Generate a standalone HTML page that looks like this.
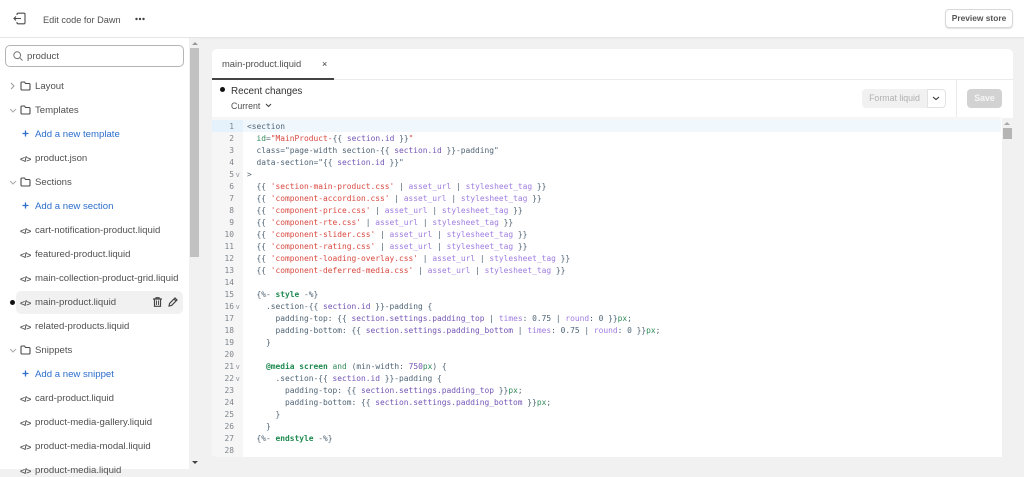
<!DOCTYPE html>
<html><head><meta charset="utf-8"><style>
html,body{margin:0;padding:0}
body{width:1024px;height:469px;overflow:hidden;background:#f1f1f1;position:relative;font-family:"Liberation Sans",sans-serif;color:#4a4a4a}
.a{position:absolute}
.t{position:absolute;font-size:9.6px;line-height:12px;white-space:nowrap;color:#505050;left:35px;margin-top:1px}
.b{color:#2c6ecb}
.i{left:20px;font-size:8.6px;font-weight:bold;letter-spacing:-.6px;color:#555}
svg{position:absolute;overflow:visible}
.c{position:absolute;left:247px;font:7.9px/12px "DejaVu Sans Mono",monospace;white-space:pre;color:#4f6475;height:12px;margin-top:1px}
.n{position:absolute;left:212px;width:22px;text-align:right;font:7.9px/12px "DejaVu Sans Mono",monospace;color:#7f858a;margin-top:1px}
.r{color:#d9483f}.p{color:#9f7ce0}.g{color:#1f8a50;font-weight:bold}.v{color:#7355b5}.e{color:#2f8a58}
.f{position:absolute;left:236px;font:7px/8px "Liberation Sans",sans-serif;color:#8c9196}
</style></head><body>
<div class="a" style="left:0;top:0;width:1024px;height:37px;background:#fff;box-shadow:0 1px 2px rgba(0,0,0,.08)"></div>
<svg style="left:13px;top:12px" width="13" height="13" viewBox="0 0 13 13" fill="none" stroke="#4a4a4a" stroke-width="1.1"><path d="M4 3V2.2a1 1 0 0 1 1-1h6a1 1 0 0 1 1 1v8.6a1 1 0 0 1-1 1H5a1 1 0 0 1-1-1V10M8 6.5H1M3 4.5l-2 2 2 2"/></svg>
<div class="t" style="left:43px;top:13px;font-size:9.2px">Edit code for Dawn</div>
<svg style="left:135px;top:17px" width="10" height="4"><circle cx="1.5" cy="2" r="1.2" fill="#444"/><circle cx="5" cy="2" r="1.2" fill="#444"/><circle cx="8.5" cy="2" r="1.2" fill="#444"/></svg>
<div class="a" style="left:945px;top:9px;width:66px;height:17px;border:1px solid #d8d8d8;border-radius:4px;background:#fff;box-shadow:0 1px 1px rgba(0,0,0,.12);text-align:center;font-size:8.4px;font-weight:bold;line-height:17px;color:#555">Preview store</div>

<div class="a" style="left:0;top:38px;width:189px;height:431px;background:#fff"></div>
<div class="a" style="left:190px;top:38px;width:9px;height:431px;background:#f1f1f1"></div>
<div class="a" style="left:190px;top:48px;width:9px;height:209px;background:#c1c1c1"></div>
<div class="a" style="left:192px;top:42px;border:3px solid transparent;border-bottom:3px solid #999;border-top:0"></div>
<div class="a" style="left:192px;top:461px;border:3px solid transparent;border-top:3px solid #444;border-bottom:0"></div>
<div class="a" style="left:5px;top:45px;width:177px;height:20px;border:1px solid #b5b5b5;border-radius:5px;background:#fff"></div>
<svg style="left:13px;top:51px" width="10" height="10" viewBox="0 0 10 10" fill="none" stroke="#777" stroke-width="1"><circle cx="4.2" cy="4.2" r="3.4"/><path d="M6.8 6.8L9.5 9.5"/></svg>
<div class="t" style="left:27px;top:50px;font-size:9.6px">product</div>

<svg style="left:10px;top:82px" width="6" height="8" fill="none" stroke="#999"><path d="M1 1l3 3-3 3"/></svg>
<svg style="left:9px;top:108px" width="8" height="6" fill="none" stroke="#aaa"><path d="M1 1l3 3 3-3"/></svg>
<svg style="left:9px;top:180px" width="8" height="6" fill="none" stroke="#aaa"><path d="M1 1l3 3 3-3"/></svg>
<svg style="left:9px;top:348px" width="8" height="6" fill="none" stroke="#aaa"><path d="M1 1l3 3 3-3"/></svg>
<svg style="left:20px;top:81px" width="11" height="10" fill="none" stroke="#4a4a4a" stroke-width="1.1"><path d="M1 2a1 1 0 0 1 1-1h2.5l1 1.5H9a1 1 0 0 1 1 1V8a1 1 0 0 1-1 1H2a1 1 0 0 1-1-1z"/></svg>
<svg style="left:20px;top:105px" width="11" height="10" fill="none" stroke="#4a4a4a" stroke-width="1.1"><path d="M1 2a1 1 0 0 1 1-1h2.5l1 1.5H9a1 1 0 0 1 1 1V8a1 1 0 0 1-1 1H2a1 1 0 0 1-1-1z"/></svg>
<svg style="left:20px;top:177px" width="11" height="10" fill="none" stroke="#4a4a4a" stroke-width="1.1"><path d="M1 2a1 1 0 0 1 1-1h2.5l1 1.5H9a1 1 0 0 1 1 1V8a1 1 0 0 1-1 1H2a1 1 0 0 1-1-1z"/></svg>
<svg style="left:20px;top:345px" width="11" height="10" fill="none" stroke="#4a4a4a" stroke-width="1.1"><path d="M1 2a1 1 0 0 1 1-1h2.5l1 1.5H9a1 1 0 0 1 1 1V8a1 1 0 0 1-1 1H2a1 1 0 0 1-1-1z"/></svg>

<div class="t" style="top:80px">Layout</div>
<div class="t" style="top:104px">Templates</div>
<div class="t b" style="top:128px">Add a new template</div>
<div class="t" style="top:152px">product.json</div>
<div class="t" style="top:176px">Sections</div>
<div class="t b" style="top:200px">Add a new section</div>
<div class="t" style="top:224px">cart-notification-product.liquid</div>
<div class="t" style="top:248px">featured-product.liquid</div>
<div class="t" style="top:272px">main-collection-product-grid.liquid</div>
<div class="a" style="left:16px;top:291px;width:167px;height:23px;background:#f1f1f1;border-radius:5px"></div>
<div class="t" style="top:296px">main-product.liquid</div>
<div class="t" style="top:320px">related-products.liquid</div>
<div class="t" style="top:344px">Snippets</div>
<div class="t b" style="top:368px">Add a new snippet</div>
<div class="t" style="top:392px">card-product.liquid</div>
<div class="t" style="top:416px">product-media-gallery.liquid</div>
<div class="t" style="top:440px">product-media-modal.liquid</div>
<div class="t" style="top:464px">product-media.liquid</div>

<div class="t i" style="top:152px">&lt;/&gt;</div>
<div class="t i" style="top:224px">&lt;/&gt;</div>
<div class="t i" style="top:248px">&lt;/&gt;</div>
<div class="t i" style="top:272px">&lt;/&gt;</div>
<div class="t i" style="top:296px">&lt;/&gt;</div>
<div class="t i" style="top:320px">&lt;/&gt;</div>
<div class="t i" style="top:392px">&lt;/&gt;</div>
<div class="t i" style="top:416px">&lt;/&gt;</div>
<div class="t i" style="top:440px">&lt;/&gt;</div>
<div class="t i" style="top:464px">&lt;/&gt;</div>

<svg style="left:22px;top:130px" width="7" height="7" stroke="#2c6ecb" stroke-width="1.3"><path d="M3.5 .5v6M.5 3.5h6"/></svg>
<svg style="left:22px;top:202px" width="7" height="7" stroke="#2c6ecb" stroke-width="1.3"><path d="M3.5 .5v6M.5 3.5h6"/></svg>
<svg style="left:22px;top:370px" width="7" height="7" stroke="#2c6ecb" stroke-width="1.3"><path d="M3.5 .5v6M.5 3.5h6"/></svg>
<div class="a" style="left:10px;top:300px;width:5px;height:5px;border-radius:50%;background:#111"></div>
<svg style="left:153px;top:297px" width="9" height="10" fill="none" stroke="#444" stroke-width="1.2"><path d="M0 2h9M3 2V.7h3V2M1.5 2.5v6.8h6V2.5"/><path d="M3.5 3.5v4.5M5.5 3.5v4.5" stroke-width=".9"/></svg>
<svg style="left:168px;top:297px" width="10" height="10" fill="none" stroke="#444" stroke-width="1.2"><path d="M1 9l.6-2.6L7 1l2 2-5.4 5.4zM6 2l2 2"/></svg>

<div class="a" style="left:212px;top:49px;width:801px;height:408px;background:#fff;border-radius:5px"></div>
<div class="a" style="left:212px;top:79px;width:801px;height:1px;background:#ececec"></div>
<div class="a" style="left:212px;top:78px;width:122px;height:1.5px;background:#444"></div>
<div class="t" style="left:222px;top:57px;font-size:9.4px">main-product.liquid</div>
<div class="t" style="left:322px;top:57px;font-size:9px;color:#333">×</div>
<div class="a" style="left:220px;top:87px;width:5px;height:5px;border-radius:50%;background:#111"></div>
<div class="t" style="left:231px;top:85px;font-size:9.9px;color:#333">Recent changes</div>
<div class="t" style="left:231px;top:99px;font-size:8.8px">Current</div>
<svg style="left:265px;top:103px" width="7" height="5" fill="none" stroke="#444" stroke-width="1.1"><path d="M1 1l2.5 2.5L6 1"/></svg>
<div class="a" style="left:862px;top:89px;width:65px;height:19px;background:#f1f1f1;border-radius:4px 0 0 4px;text-align:center;font-size:8.8px;line-height:19px;color:#b0b0b0">Format liquid</div>
<div class="a" style="left:927px;top:89px;width:17px;height:17px;background:#fff;border:1px solid #e2e2e2;border-radius:0 4px 4px 0"></div>
<svg style="left:932px;top:96px" width="8" height="5" fill="none" stroke="#333" stroke-width="1.1"><path d="M1 1l3 2.5L7 1"/></svg>
<div class="a" style="left:956px;top:80px;width:1px;height:37px;background:#ebebeb"></div>
<div class="a" style="left:967px;top:89px;width:35px;height:19px;background:#d2d2d2;border-radius:4px;text-align:center;font-size:8.8px;line-height:19px;color:#f5f5f5;font-weight:bold">Save</div>

<div class="a" style="left:212px;top:117px;width:789px;height:3px;background:#f6f6f6"></div>
<div class="a" style="left:212px;top:120px;width:31px;height:337px;background:#f6f6f7;border-radius:0 0 0 5px"></div>
<div class="a" style="left:212px;top:120px;width:31px;height:12px;background:#e6f2fb"></div>
<div class="a" style="left:243px;top:120px;width:758px;height:12px;background:#f0f8fd"></div>
<div class="a" style="left:1002px;top:118px;width:11px;height:339px;background:#f1f1f1"></div>
<div class="a" style="left:1003px;top:128px;width:9px;height:11px;background:#b5b5b5"></div>
<div class="a" style="left:1004px;top:122px;border:3px solid transparent;border-bottom:3px solid #aaa;border-top:0"></div>

<div class="n" style="top:120px">1</div><div class="n" style="top:132px">2</div><div class="n" style="top:144px">3</div><div class="n" style="top:156px">4</div><div class="n" style="top:168px">5</div><div class="n" style="top:180px">6</div><div class="n" style="top:192px">7</div><div class="n" style="top:204px">8</div><div class="n" style="top:216px">9</div><div class="n" style="top:228px">10</div><div class="n" style="top:240px">11</div><div class="n" style="top:252px">12</div><div class="n" style="top:264px">13</div><div class="n" style="top:276px">14</div><div class="n" style="top:288px">15</div><div class="n" style="top:300px">16</div><div class="n" style="top:312px">17</div><div class="n" style="top:324px">18</div><div class="n" style="top:336px">19</div><div class="n" style="top:348px">20</div><div class="n" style="top:360px">21</div><div class="n" style="top:372px">22</div><div class="n" style="top:384px">23</div><div class="n" style="top:396px">24</div><div class="n" style="top:408px">25</div><div class="n" style="top:420px">26</div><div class="n" style="top:432px">27</div><div class="n" style="top:444px">28</div>
<div class="f" style="top:172px">v</div><div class="f" style="top:304px">v</div><div class="f" style="top:364px">v</div><div class="f" style="top:376px">v</div>

<div class="c" style="top:120px">&lt;section</div>
<div class="c" style="top:132px">  <span class="e">id</span>=<span class="r">"MainProduct-</span>{{ <span class="v">section.id</span> }}<span class="r">"</span></div>
<div class="c" style="top:144px">  class="page-width section-{{ <span class="v">section.id</span> }}-padding"</div>
<div class="c" style="top:156px">  data-section="{{ <span class="v">section.id</span> }}"</div>
<div class="c" style="top:168px">&gt;</div>
<div class="c" style="top:180px">  {{ <span class="r">'section-main-product.css'</span> | <span class="p">asset_url</span> | <span class="p">stylesheet_tag</span> }}</div>
<div class="c" style="top:192px">  {{ <span class="r">'component-accordion.css'</span> | <span class="p">asset_url</span> | <span class="p">stylesheet_tag</span> }}</div>
<div class="c" style="top:204px">  {{ <span class="r">'component-price.css'</span> | <span class="p">asset_url</span> | <span class="p">stylesheet_tag</span> }}</div>
<div class="c" style="top:216px">  {{ <span class="r">'component-rte.css'</span> | <span class="p">asset_url</span> | <span class="p">stylesheet_tag</span> }}</div>
<div class="c" style="top:228px">  {{ <span class="r">'component-slider.css'</span> | <span class="p">asset_url</span> | <span class="p">stylesheet_tag</span> }}</div>
<div class="c" style="top:240px">  {{ <span class="r">'component-rating.css'</span> | <span class="p">asset_url</span> | <span class="p">stylesheet_tag</span> }}</div>
<div class="c" style="top:252px">  {{ <span class="r">'component-loading-overlay.css'</span> | <span class="p">asset_url</span> | <span class="p">stylesheet_tag</span> }}</div>
<div class="c" style="top:264px">  {{ <span class="r">'component-deferred-media.css'</span> | <span class="p">asset_url</span> | <span class="p">stylesheet_tag</span> }}</div>
<div class="c" style="top:288px">  {%- <span class="g">style</span> -%}</div>
<div class="c" style="top:300px">    .section-{{ <span class="v">section.id</span> }}-padding {</div>
<div class="c" style="top:312px">      padding-top: {{ <span class="v">section.settings.padding_top</span> | <span class="p">times</span>: 0.75 | <span class="p">round</span>: 0 }}<span class="e">px</span>;</div>
<div class="c" style="top:324px">      padding-bottom: {{ <span class="v">section.settings.padding_bottom</span> | <span class="p">times</span>: 0.75 | <span class="p">round</span>: 0 }}<span class="e">px</span>;</div>
<div class="c" style="top:336px">    }</div>
<div class="c" style="top:360px">    <span class="g">@media screen</span> <span class="e">and</span> (min-width: <span class="v">750</span><span class="e">px</span>) {</div>
<div class="c" style="top:372px">      .section-{{ <span class="v">section.id</span> }}-padding {</div>
<div class="c" style="top:384px">        padding-top: {{ <span class="v">section.settings.padding_top</span> }}<span class="e">px</span>;</div>
<div class="c" style="top:396px">        padding-bottom: {{ <span class="v">section.settings.padding_bottom</span> }}<span class="e">px</span>;</div>
<div class="c" style="top:408px">      }</div>
<div class="c" style="top:420px">    }</div>
<div class="c" style="top:432px">  {%- <span class="g">endstyle</span> -%}</div>
</body></html>
